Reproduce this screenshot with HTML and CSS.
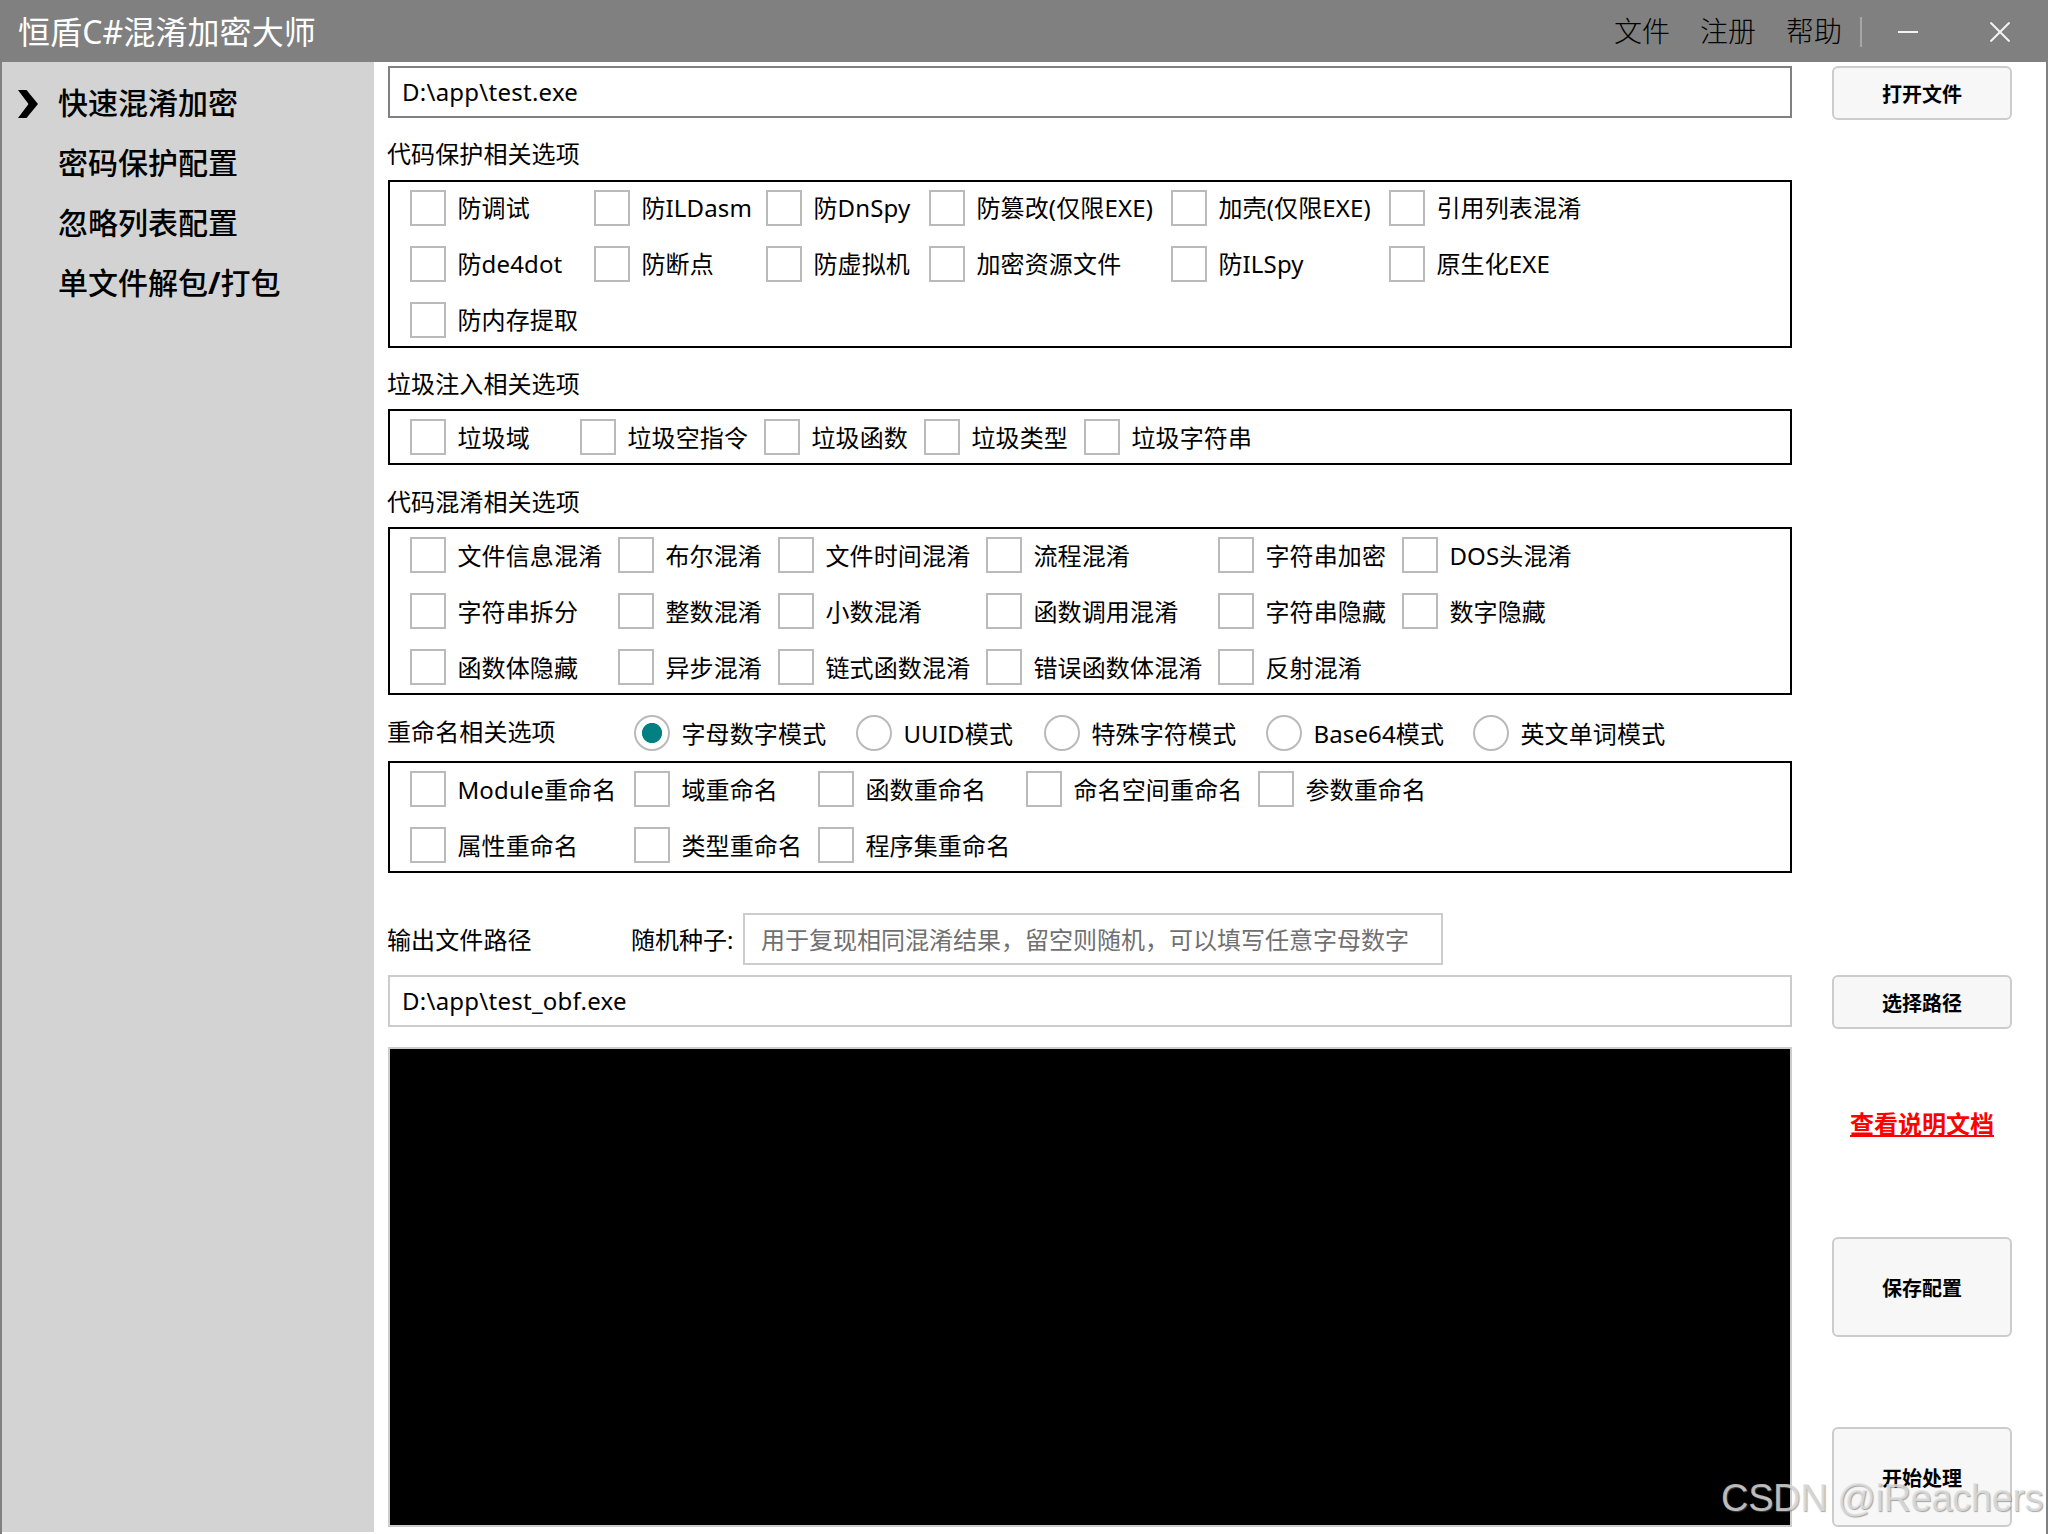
FILE: index.html
```html
<!DOCTYPE html>
<html lang="zh-CN">
  <head>
    <meta charset="UTF-8" />
    <title>恒盾C#混淆加密大师</title>
    <link rel="stylesheet" href="styles.css">
  </head>
  <body>
    <!-- Title bar -->
    <header class="titlebar">
      <h1 class="title">恒盾C#混淆加密大师</h1>
      <nav class="menu">
        <span>文件</span>
        <span>注册</span>
        <span>帮助</span>
      </nav>
      <div class="divider"></div>
      <svg class="win-btn" width="20" height="20" viewBox="0 0 20 20"><path d="M0 10H20" /></svg>
      <svg class="win-btn close" width="20" height="20" viewBox="0 0 20 20"><path d="M0.5 0.5L19.5 19.5M19.5 0.5L0.5 19.5" /></svg>
    </header>

    <div class="window">
      <!-- Sidebar -->
      <aside class="sidebar">
        <div class="nav-item">
          <svg class="arrow" width="20" height="28" viewBox="0 0 20 28"><path d="M0 0H8.5L20 14L8.5 28H0L10.5 14Z" /></svg>快速混淆加密
        </div>
        <div class="nav-item">密码保护配置</div>
        <div class="nav-item">忽略列表配置</div>
        <div class="nav-item">单文件解包<b>/</b>打包</div>
      </aside>

      <!-- Options -->
      <main class="content">
        <input class="path active" type="text" value="D:\app\test.exe" />

        <h2 class="protect-title">代码保护相关选项</h2>
        <div class="group protect">
          <label><input type="checkbox" /><span>防调试</span></label>
          <label><input type="checkbox" /><span>防ILDasm</span></label>
          <label><input type="checkbox" /><span>防DnSpy</span></label>
          <label><input type="checkbox" /><span>防篡改(仅限EXE)</span></label>
          <label><input type="checkbox" /><span>加壳(仅限EXE)</span></label>
          <label><input type="checkbox" /><span>引用列表混淆</span></label>
          <label><input type="checkbox" /><span>防de4dot</span></label>
          <label><input type="checkbox" /><span>防断点</span></label>
          <label><input type="checkbox" /><span>防虚拟机</span></label>
          <label><input type="checkbox" /><span>加密资源文件</span></label>
          <label><input type="checkbox" /><span>防ILSpy</span></label>
          <label><input type="checkbox" /><span>原生化EXE</span></label>
          <label><input type="checkbox" /><span>防内存提取</span></label>
        </div>

        <h2 class="junk-title">垃圾注入相关选项</h2>
        <div class="group junk">
          <label><input type="checkbox" /><span>垃圾域</span></label>
          <label><input type="checkbox" /><span>垃圾空指令</span></label>
          <label><input type="checkbox" /><span>垃圾函数</span></label>
          <label><input type="checkbox" /><span>垃圾类型</span></label>
          <label><input type="checkbox" /><span>垃圾字符串</span></label>
        </div>

        <h2 class="confuse-title">代码混淆相关选项</h2>
        <div class="group confuse">
          <label><input type="checkbox" /><span>文件信息混淆</span></label>
          <label><input type="checkbox" /><span>布尔混淆</span></label>
          <label><input type="checkbox" /><span>文件时间混淆</span></label>
          <label><input type="checkbox" /><span>流程混淆</span></label>
          <label><input type="checkbox" /><span>字符串加密</span></label>
          <label><input type="checkbox" /><span>DOS头混淆</span></label>
          <label><input type="checkbox" /><span>字符串拆分</span></label>
          <label><input type="checkbox" /><span>整数混淆</span></label>
          <label><input type="checkbox" /><span>小数混淆</span></label>
          <label><input type="checkbox" /><span>函数调用混淆</span></label>
          <label><input type="checkbox" /><span>字符串隐藏</span></label>
          <label><input type="checkbox" /><span>数字隐藏</span></label>
          <label><input type="checkbox" /><span>函数体隐藏</span></label>
          <label><input type="checkbox" /><span>异步混淆</span></label>
          <label><input type="checkbox" /><span>链式函数混淆</span></label>
          <label><input type="checkbox" /><span>错误函数体混淆</span></label>
          <label><input type="checkbox" /><span>反射混淆</span></label>
        </div>

        <div class="rename-head">
          <h2>重命名相关选项</h2>
          <label><input type="radio" name="mode" checked /><span>字母数字模式</span></label>
          <label><input type="radio" name="mode" /><span>UUID模式</span></label>
          <label><input type="radio" name="mode" /><span>特殊字符模式</span></label>
          <label><input type="radio" name="mode" /><span>Base64模式</span></label>
          <label><input type="radio" name="mode" /><span>英文单词模式</span></label>
        </div>
        <div class="group rename">
          <label><input type="checkbox" /><span>Module重命名</span></label>
          <label><input type="checkbox" /><span>域重命名</span></label>
          <label><input type="checkbox" /><span>函数重命名</span></label>
          <label><input type="checkbox" /><span>命名空间重命名</span></label>
          <label><input type="checkbox" /><span>参数重命名</span></label>
          <label><input type="checkbox" /><span>属性重命名</span></label>
          <label><input type="checkbox" /><span>类型重命名</span></label>
          <label><input type="checkbox" /><span>程序集重命名</span></label>
        </div>

        <div class="output-head">
          <h2>输出文件路径</h2>
          <span class="seed-label">随机种子:</span>
          <input class="seed" type="text" placeholder="用于复现相同混淆结果，留空则随机，可以填写任意字母数字" />
        </div>
        <input class="path" type="text" value="D:\app\test_obf.exe" />
        <div class="console"></div>
      </main>

      <!-- Action buttons -->
      <aside class="actions">
        <button class="open">打开文件</button>
        <button class="choose">选择路径</button>
        <a class="docs">查看说明文档</a>
        <button class="save">保存配置</button>
        <button class="start">开始处理</button>
      </aside>
    </div>

    <div class="watermark">CSDN @iReachers</div>
  </body>
</html>
```
FILE: styles.css
```css
* {
  box-sizing: border-box;
}

body {
  margin: 0;
  width: 2048px;
  height: 1534px;
  overflow: hidden;
  position: relative;
  background: #fff;
  color: #000;
  font-family: "Noto Sans", "Noto Sans CJK SC", sans-serif;
  font-size: 24px;
  line-height: 36px;
}

h1,
h2 {
  margin: 0;
  font-size: 24px;
  font-weight: normal;
}

/* title bar */
.titlebar {
  display: flex;
  align-items: center;
  height: 62px;
  padding: 0 38px 0 18px;
  background: #808080;
}

.title {
  flex: 1;
  padding-top: 2px;
  color: #fff;
  font-size: 32px;
  letter-spacing: 0.1px;
}

.menu {
  display: flex;
  gap: 30px;
  font-size: 28px;
  font-weight: 300;
}

.divider {
  width: 2px;
  height: 30px;
  margin: 2px 36px 0 18px;
  background: #a6a6a6;
}

.win-btn {
  margin-top: 2px;
  fill: none;
  stroke: #f2f2f2;
  stroke-width: 2;
}

.close {
  margin-left: 72px;
}

.window {
  display: flex;
  height: 1472px;
  border-left: 2px solid #808080;
  border-right: 2px solid #808080;
}

/* sidebar */
.sidebar {
  width: 372px;
  height: 1470px;
  padding-top: 10px;
  background: #d3d3d3;
}

.nav-item {
  position: relative;
  height: 60px;
  padding-left: 56px;
  font-size: 30px;
  font-weight: 500;
  line-height: 61px;
}

.arrow {
  position: absolute;
  left: 16px;
  top: 18px;
}

/* options */
.content {
  display: flex;
  flex-direction: column;
  width: 1404px;
  margin-left: 14px;
  padding-top: 4px;
}

input[type="text"] {
  height: 52px;
  padding: 0 12px 2px;
  border: 2px solid #ccc;
  outline: none;
  background: #fff;
  color: #000;
  font: inherit;
  letter-spacing: 0.25px;
}

input.active {
  border-color: #808080;
}

h2 {
  text-indent: -1px;
  letter-spacing: 0.1px;
}

.protect-title {
  margin: 18px 0 8px;
}

.junk-title {
  margin: 18px 0 7px;
}

.confuse-title {
  margin: 19px 0 7px;
}

.group {
  display: grid;
  grid-auto-rows: 36px;
  row-gap: 20px;
  padding: 8px 20px;
  border: 2px solid #000;
}

.protect {
  grid-template-columns: 184px 172px 163px 242px 218px 220px;
}

.junk {
  grid-template-columns: 170px 184px 160px 160px 200px;
}

.confuse {
  grid-template-columns: 208px 160px 208px 232px 184px 200px;
}

.rename {
  grid-template-columns: 224px 184px 208px 232px 200px;
}

label {
  display: flex;
  align-items: center;
  gap: 11.4px;
  height: 36px;
  white-space: nowrap;
  letter-spacing: 0.15px;
}

label span {
  padding-top: 2px;
}

.protect span {
  padding-top: 0;
}

input[type="checkbox"],
input[type="radio"] {
  appearance: none;
  flex: none;
  width: 36px;
  height: 36px;
  margin: 0;
  border: 2px solid #bababa;
  background: #fff;
}

input[type="radio"] {
  border-radius: 50%;
}

input[type="radio"]:checked {
  background: radial-gradient(circle, #008080 9.7px, #fff 10.4px);
}

.rename-head {
  display: grid;
  grid-template-columns: 246px 222px 188px 222px 207px 1fr;
  height: 36px;
  margin: 20px 0 10px;
}

.rename-head h2 {
  margin-top: -1px;
}

.output-head {
  display: flex;
  align-items: center;
  margin: 40px 0 10px;
}

.output-head h2 {
  width: 243px;
  padding-top: 2px;
}

.seed-label {
  width: 112px;
  padding-top: 2px;
}

.seed {
  width: 700px;
}

input[type="text"].seed {
  padding: 0 16px;
  letter-spacing: 0;
}

.seed::placeholder {
  color: #707070;
}

.console {
  height: 480px;
  margin-top: 20px;
  border: 2px solid #ccc;
  background: #000;
}

/* right column */
.actions {
  display: flex;
  flex-direction: column;
  width: 180px;
  margin-left: 40px;
  padding-top: 4px;
}

button {
  padding: 0;
  border: 2px solid #ccc;
  border-radius: 6px;
  background: #f7f7f7;
  color: #000;
  font-family: inherit;
  font-size: 20px;
  font-weight: bold;
}

.open,
.choose {
  height: 54px;
}

.choose {
  margin-top: 855px;
}

.docs {
  margin: 77px 0 95px;
  color: #f00;
  font-weight: bold;
  text-align: center;
  text-decoration: underline;
}

.save,
.start {
  height: 100px;
}

.start {
  margin-top: 90px;
}

.watermark {
  position: absolute;
  right: 5px;
  bottom: 12px;
  color: rgba(225, 225, 225, 0.8);
  font-family: "Liberation Sans", sans-serif;
  font-size: 38px;
  letter-spacing: -0.4px;
  line-height: 48px;
  text-shadow: 1px 1px 1px rgba(110, 110, 110, 0.6);
}
```
